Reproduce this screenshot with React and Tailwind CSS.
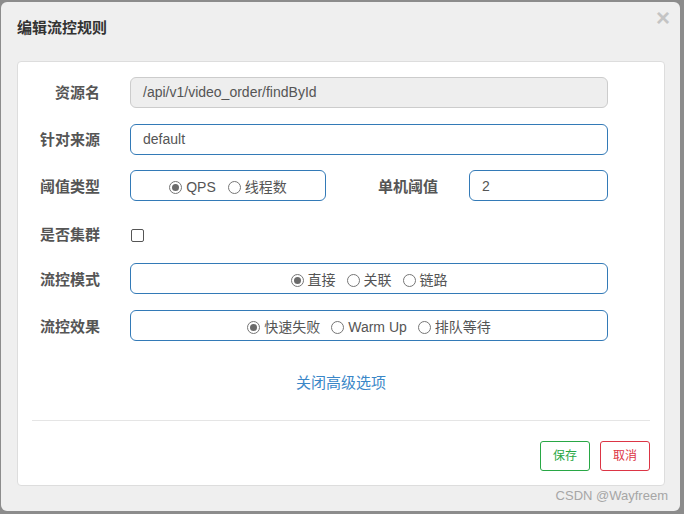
const FONT = { fontFamily: '"Liberation Sans", "Noto Sans CJK SC", sans-serif' };

function Radio({ checked, label }) {
  return (
    <span className="inline-flex items-center">
      <span className="w-[13px] h-[13px] rounded-full border border-[#767676] bg-white flex items-center justify-center">
        {checked && <span className="w-[7px] h-[7px] rounded-full bg-[#6b6b6b]" />}
      </span>
      <span className="ml-[4px]">{label}</span>
    </span>
  );
}

function Label({ children, className = "" }) {
  return (
    <div className={"text-right font-bold text-[15px] text-[#555] shrink-0 " + className}>
      {children}
    </div>
  );
}

export default function App() {
  return (
    <div className="w-[684px] h-[514px] bg-[#8c8c8c] pt-[2px] pl-[1px] overflow-hidden" style={FONT}>
      <div className="w-[679px] h-[509px] bg-[#efefef] rounded-[6px] px-[16px] relative">
        {/* header */}
        <div className="h-[59px] flex items-center pb-[6px]">
          <h4 className="text-[15px] font-bold text-[#333]">编辑流控规则</h4>
        </div>
        <span className="absolute right-[10px] top-[1px] text-[24px] font-bold text-[#c4c4c4] leading-[30px]">×</span>

        {/* body */}
        <div className="w-[648px] h-[425px] bg-white border border-[#ddd] rounded-[4px] px-[14px] pt-[15px] text-[14px] text-[#555]">
          <div className="flex items-center h-[31px]">
            <Label className="w-[68px] mr-[30px] pt-[2px]">资源名</Label>
            <div className="w-[478px] h-[31px] bg-[#eee] border border-[#ccc] rounded-[6px] pl-[12px] flex items-center">
              /api/v1/video_order/findById
            </div>
          </div>

          <div className="flex items-center h-[31px] mt-[16px]">
            <Label className="w-[68px] mr-[30px] pt-[2px]">针对来源</Label>
            <div className="w-[478px] h-[31px] border border-[#337ab7] rounded-[6px] pl-[12px] flex items-center">
              default
            </div>
          </div>

          <div className="flex items-center h-[31px] mt-[15px]">
            <Label className="w-[68px] mr-[30px] pt-[3px]">阈值类型</Label>
            <div className="w-[196px] h-[31px] border border-[#337ab7] rounded-[6px] flex items-center justify-center gap-[12px] pt-[3px]">
              <Radio checked label="QPS" />
              <Radio label="线程数" />
            </div>
            <Label className="w-[112px] mr-[31px] pt-[3px]">单机阈值</Label>
            <div className="w-[139px] h-[31px] border border-[#337ab7] rounded-[6px] pl-[12px] flex items-center pt-[1px]">
              2
            </div>
          </div>

          <div className="flex items-center h-[31px] mt-[19px]">
            <Label className="w-[68px] mr-[31px]">是否集群</Label>
            <span className="w-[13px] h-[13px] border border-[#555] rounded-[2px] bg-white" />
          </div>

          <div className="flex items-center h-[31px] mt-[12px]">
            <Label className="w-[68px] mr-[30px] pt-[3px]">流控模式</Label>
            <div className="w-[478px] h-[31px] border border-[#337ab7] rounded-[6px] flex items-center justify-center gap-[11px] pt-[4px]">
              <Radio checked label="直接" />
              <Radio label="关联" />
              <Radio label="链路" />
            </div>
          </div>

          <div className="flex items-center h-[31px] mt-[16px]">
            <Label className="w-[68px] mr-[30px] pt-[3px]">流控效果</Label>
            <div className="w-[478px] h-[31px] border border-[#337ab7] rounded-[6px] flex items-center justify-center gap-[11px] pt-[4px]">
              <Radio checked label="快速失败" />
              <Radio label="Warm Up" />
              <Radio label="排队等待" />
            </div>
          </div>

          <div className="mt-[32px] h-[20px] leading-[20px] text-center text-[15px] text-[#3a87c8]">关闭高级选项</div>

          <div className="mt-[27px] border-t border-[#e5e5e5]" />

          <div className="mt-[20px] flex justify-end gap-[10px]">
            <button className="w-[50px] h-[30px] border border-[#28a745] text-[#28a745] rounded-[3px] text-[12px] bg-white">
              保存
            </button>
            <button className="w-[50px] h-[30px] border border-[#dc3545] text-[#dc3545] rounded-[3px] text-[12px] bg-white">
              取消
            </button>
          </div>
        </div>

        <div className="absolute right-[12px] bottom-[6px] text-[13px] text-[#a6a6a6]">CSDN @Wayfreem</div>
      </div>
    </div>
  );
}
